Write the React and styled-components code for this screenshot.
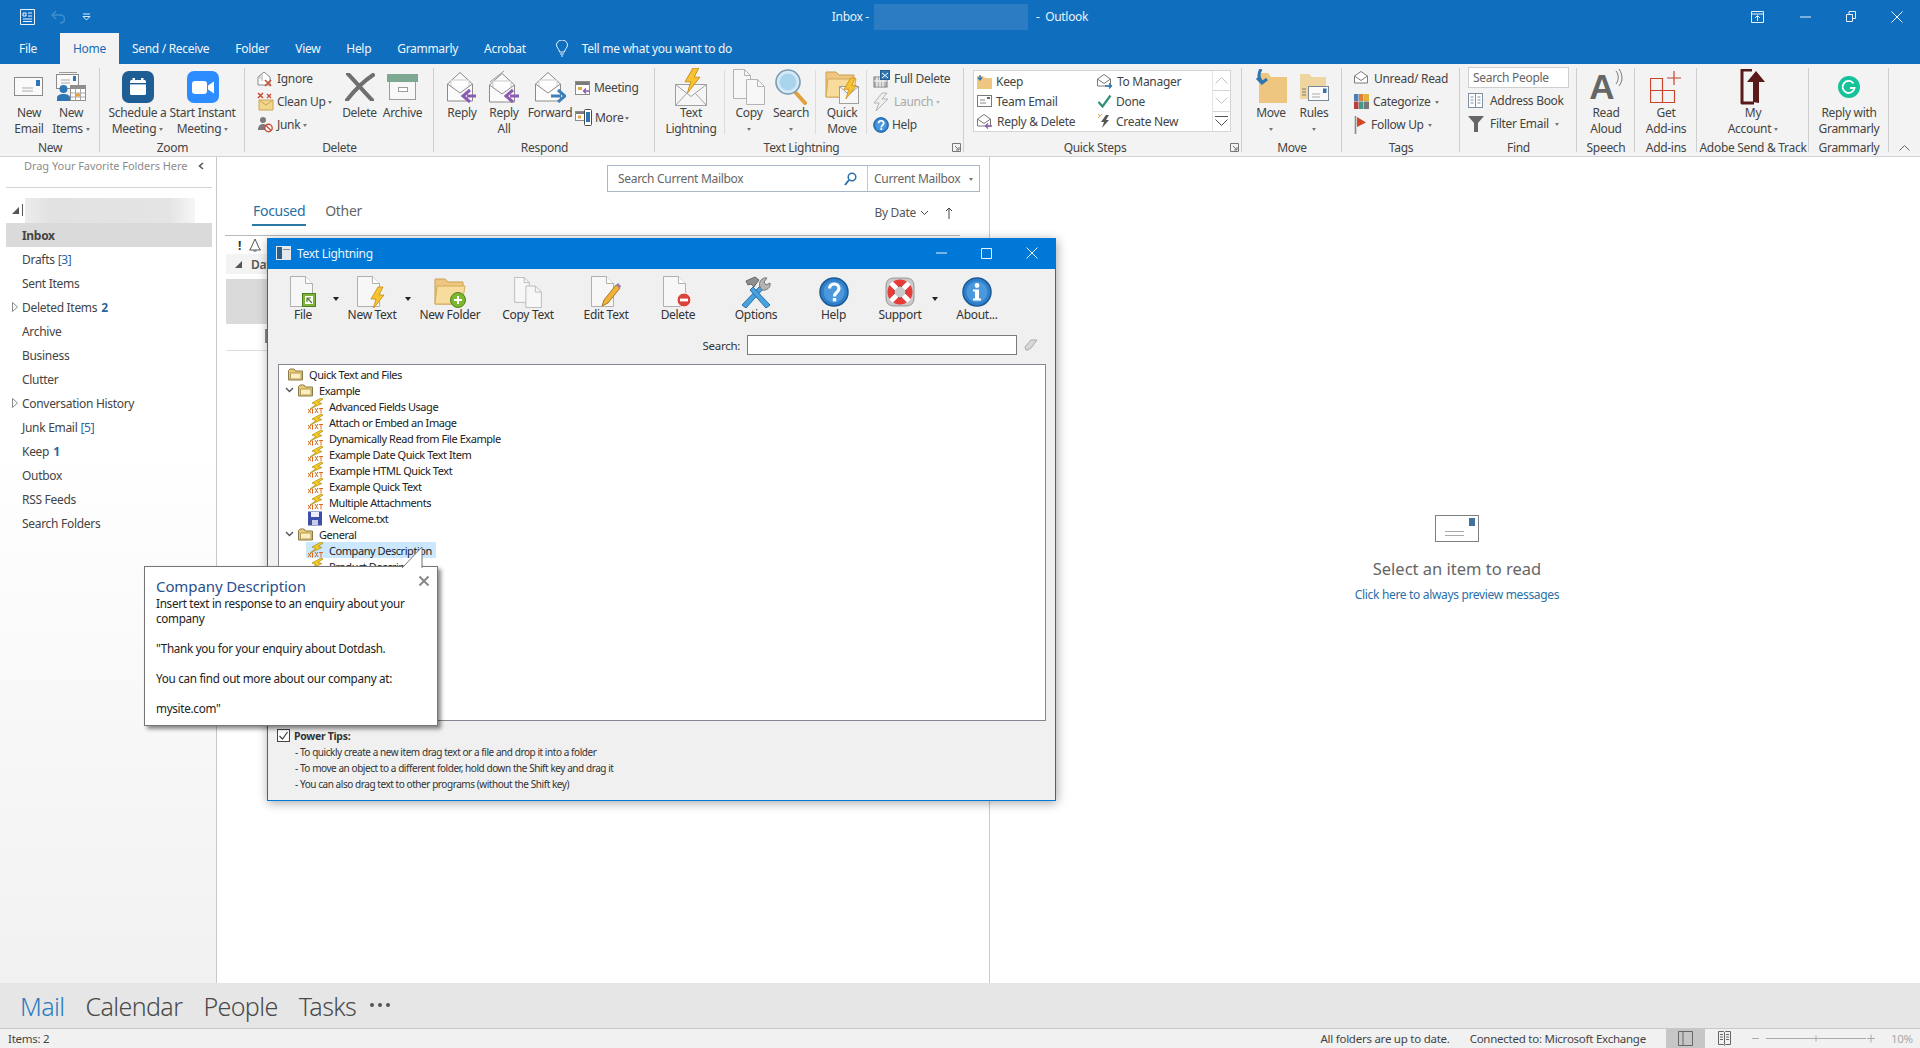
import React from "react";
import styled, { createGlobalStyle } from "styled-components";

const FONT = `"Noto Sans", "Open Sans", "Liberation Sans", sans-serif`;

const Global = createGlobalStyle`
  html, body { margin: 0; padding: 0; background: #fff; }
  body { font-family: ${FONT}; font-size: 12px; color: #444; letter-spacing: -0.3px; }
  svg { display: block; flex: none; }
`;

/* ---------- page frame ---------- */
const Page = styled.div`
  position: relative; width: 1920px; height: 1048px; overflow: hidden;
  display: flex; flex-direction: column; background: #fff;
`;
const TitleBar = styled.div`
  height: 33px; background: #106ebe; color: #e9f2fa;
  display: grid; grid-template-columns: 1fr auto 1fr; align-items: center;
`;
const Qat = styled.div`display: flex; align-items: center; padding-left: 20px; gap: 15px;`;
const TitleText = styled.div`display: flex; align-items: center; font-size: 12px; gap: 5px;`;
const TitleTail = styled.span`margin-left: 3px;`;
const Blur = styled.span`width: 154px; height: 26px; background: #2b7cc3; display: block;`;
const WinBtns = styled.div`display: flex; justify-content: flex-end; align-items: center; gap: 35px; padding-right: 17px;`;
const TabBar = styled.div`height: 31px; background: #106ebe; display: flex; align-items: stretch; padding-left: 6px;`;
const Tab = styled.div`
  display: flex; align-items: center; padding: 0 13px; font-size: 12px; margin-right: ${p => p.$mr || 0}px;
  color: ${p => (p.$active ? "#1a6bb5" : "#f2f7fc")};
  background: ${p => (p.$active ? "#f3f3f3" : "transparent")};
`;
const TellMe = styled.div`display: flex; align-items: center; gap: 14px; padding-left: 17px; color: #f2f7fc; font-size: 12px;`;

/* ---------- ribbon ---------- */
const Ribbon = styled.div`
  height: 92px; background: #f3f3f3; border-bottom: 1px solid #d2d2d2; display: flex; flex: none;
`;
const Group = styled.div`
  width: ${p => p.$w}px; flex: none; box-sizing: border-box; display: flex; flex-direction: column; position: relative;
  background: linear-gradient(#cfcfcf, #cfcfcf) right 4px / 1px 84px no-repeat;
`;
const GroupBody = styled.div`flex: 1; display: flex; align-items: flex-start; padding-left: ${p => p.$pl || 0}px; padding-top: 4px; min-height: 0;`;
const GroupFoot = styled.div`height: 16px; display: flex; align-items: center; padding-bottom: 1px; color: #444; font-size: 12px;`;
const GroupLabel = styled.div`flex: 1; text-align: center; white-space: nowrap;`;
const Launcher = styled.div`width: 16px; display: flex; justify-content: center;`;
const Big = styled.div`
  width: ${p => p.$w}px; flex: none; display: flex; flex-direction: column; align-items: center;
  text-align: center; line-height: 16px; color: ${p => p.$dim ? "#999" : "#444"};
`;
const BigIcon = styled.div`height: 37px; display: flex; align-items: center; justify-content: center;`;
const BigLine = styled.div`height: 16px; white-space: nowrap; display: flex; align-items: center; justify-content: center; gap: 3px;`;
const Caret = styled.span`
  display: inline-block; width: 0; height: 0; border-left: 2.5px solid transparent; border-right: 2.5px solid transparent;
  border-top: 3px solid ${p => p.$c || "#777"}; margin-top: 1px;
`;
const SmallCol = styled.div`
  width: ${p => p.$w}px; flex: none; display: flex; flex-direction: column; margin-top: -1px; padding-top: ${p => p.$pt || 0}px; gap: ${p => p.$gap || 0}px;
`;
const SmallRow = styled.div`
  height: 23px; display: flex; align-items: center; gap: ${p => p.$gap ?? 3}px; white-space: nowrap;
  color: ${p => (p.$dim ? "#aaa" : "#444")};
`;
const VSep = styled.div`width: 1px; height: 64px; background: #dcdcdc; margin: 2px ${p => p.$mr || 3}px 0 ${p => p.$ml || 3}px; flex: none;`;
const Gallery = styled.div`
  margin: 2px 0 0 9px; width: 258px; height: 62px; box-sizing: border-box; background: #fff; border: 1px solid #d4d4d4;
  display: grid; grid-template-columns: 120px 1fr 18px;
`;
const GalleryCol = styled.div`padding: 0 0 0 3px; display: flex; flex-direction: column;`;
const GalleryRow = styled.div`height: 20px; display: flex; align-items: center; gap: 4px; white-space: nowrap; color: #444;`;
const GalleryScroll = styled.div`display: flex; flex-direction: column; border-left: 1px solid #e4e4e4;`;
const ScrollCell = styled.div`flex: 1; display: flex; align-items: center; justify-content: center; border-bottom: 1px solid #d4d4d4; &:last-child{border-bottom:0;}`;
const PeopleBox = styled.div`
  width: 101px; height: 21px; box-sizing: border-box; border: 1px solid #cfcfcf; background: #fff; color: #666;
  display: flex; align-items: center; padding-left: 4px; margin-bottom: 1px;
`;
const ReadA = styled.span`font-size: 35px; line-height: 37px; font-weight: 700; color: #666; font-family: "Liberation Sans", sans-serif; letter-spacing: 0;`;
const IconPair = styled.div`display: flex; align-items: flex-start; gap: 0;`;
const RibbonEnd = styled.div`flex: 1; display: flex; align-items: flex-end; justify-content: center; padding-bottom: 5px;`;

/* ---------- main ---------- */
const Main = styled.div`flex: 1; display: flex; min-height: 0;`;
const FolderPane = styled.div`
  width: 217px; flex: none; box-sizing: border-box; border-right: 1px solid #c8c8c8;
  background: linear-gradient(#ffffff 35%, #f1f1f1);
`;
const Favorites = styled.div`
  height: 31px; box-sizing: border-box; margin: 0 4px 0 6px; border-bottom: 1px solid #d4d4d4; padding: 0 0 0 18px;
  display: flex; align-items: flex-start; justify-content: space-between; line-height: 18px; color: #8c8c8c; font-size: 11px; letter-spacing: -0.05px;
`;
const FavChevron = styled.div`padding: 5px 8px 0 0;`;
const AccountRow = styled.div`margin: 9px 4px 0 6px; height: 26px; display: flex; align-items: center;`;
const AccountBlur = styled.div`width: 170px; height: 25px; margin-left: 2px; background: linear-gradient(90deg,#ececec,#e2e2e2 15%,#e4e4e4 85%,#f6f6f6);`;
const Cursorbar = styled.div`width: 1px; height: 12px; background: #555;`;
const FolderRow = styled.div`
  margin: 0 4px 0 6px; height: 24px; display: flex; align-items: center; font-size: 12px;
  background: ${p => (p.$active ? "#dadada" : "transparent")}; font-weight: ${p => (p.$active ? 700 : 400)}; color: #444;
`;
const Slot = styled.div`width: 16px; flex: none; display: flex; justify-content: center; padding-left: 2px; box-sizing: border-box;`;
const Count = styled.span`color: #2a6599; margin-left: ${p => p.$bold ? 4 : 3}px; font-weight: ${p => (p.$bold ? 700 : 400)};`;

const ListPane = styled.div`width: 773px; flex: none; box-sizing: border-box; border-right: 1px solid #c8c8c8; display: flex; flex-direction: column;`;
const SearchWrap = styled.div`display: flex; justify-content: flex-end; padding: 8px 9px 0 0;`;
const SearchBox = styled.div`
  width: 373px; height: 27px; box-sizing: border-box; border: 1px solid #a9b8c6; display: flex; align-items: center; color: #666;
`;
const SearchInput = styled.div`flex: 1; display: flex; align-items: center; justify-content: space-between; padding: 0 10px; height: 100%; border-right: 1px solid #c0c8d0;`;
const SearchScope = styled.div`width: 111px; flex: none; display: flex; justify-content: space-between; align-items: center; padding: 0 6px; box-sizing: border-box;`;
const ListTabs = styled.div`height: 34px; display: flex; align-items: flex-end; padding: 0 32px 0 35px; margin-top: 0;`;
const LTab = styled.div`
  font-size: 14px; height: 24px; display: flex; align-items: flex-start; line-height: 22px; margin-right: 18px; padding: 0 1px;
  color: ${p => (p.$active ? "#2a6f9f" : "#666")}; border-bottom: 2px solid ${p => (p.$active ? "#2a78a8" : "transparent")};
`;
const Sorter = styled.div`margin-left: auto; height: 24px; display: flex; align-items: flex-start; line-height: 22px; gap: 4px; color: #555;`;
const ListRule = styled.div`margin: 9px 29px 0 8px; border-top: 1px solid #b9b9b9;`;
const HeaderIcons = styled.div`height: 18px; display: flex; align-items: center; padding-left: 21px; gap: 8px; color: #333; font-weight: 700;`;
const GroupHead = styled.div`height: 20px; margin-left: 9px; background: #f3f3f3; display: flex; align-items: center; padding-left: 9px; gap: 9px; font-weight: 600; color: #555;`;
const SelBlock = styled.div`height: 45px; margin: 5px 0 0 9px; background: #dadada;`;
const RowFoot = styled.div`height: 27px; margin-left: 9px; border-bottom: 1px solid #dedede; box-sizing: border-box; padding: 5px 0 0 39px;`;
const TinyMark = styled.div`width: 3px; height: 14px; background: #888;`;
const Reading = styled.div`flex: 1; display: flex; flex-direction: column; align-items: center; justify-content: center; padding: 0 0 22px 4px;`;
const ReadTitle = styled.div`margin-top: 15px; font-size: 16.5px; line-height: 24px; color: #666; letter-spacing: 0;`;
const ReadLink = styled.div`margin-top: 5px; font-size: 12px; line-height: 18px; color: #2a6fa8; letter-spacing: -0.33px;`;

const NavBar = styled.div`
  height: 46px; box-sizing: border-box; background: #e6e6e6; border-bottom: 1px solid #c8c8c8; flex: none;
  display: flex; align-items: center; padding: 0 0 0 20px; gap: 21px;
`;
const NavItem = styled.div`font-size: 25px; font-weight: 300; letter-spacing: -0.6px; color: ${p => (p.$active ? "#2b7cc0" : "#4a4a4a")};`;
const NavDots = styled.div`display: flex; gap: 4px; margin: 0 0 2px -7px;`;
const Dot = styled.i`width: 4px; height: 4px; border-radius: 50%; background: #555; display: block;`;
const StatusBar = styled.div`height: 19px; background: #f1f1f1; flex: none; display: flex; align-items: center; padding-left: 8px; color: #444; font-size: 11.5px; letter-spacing: -0.25px;`;
const StatusText = styled.div`margin-left: ${p => p.$ml || 0}px; white-space: nowrap; flex: none;`;
const ViewBtn = styled.div`
  width: ${p => p.$w || 39}px; height: 19px; display: flex; align-items: center; justify-content: center; flex: none;
  background: ${p => (p.$on ? "#c6c6c6" : "transparent")}; margin-left: ${p => p.$ml || 0}px;
`;
const Zoomer = styled.div`display: flex; align-items: center; margin-left: 8px; color: #999; flex: none;`;
const ZoomPct = styled.div`margin-left: 16px; color: #aaa; white-space: nowrap;`;

/* ---------- dialog ---------- */
const Dialog = styled.div`
  position: absolute; left: 267px; top: 238px; width: 789px; height: 563px; box-sizing: border-box;
  border: 1px solid #0078d7; background: #f0f0f0; box-shadow: 1px 2px 10px rgba(0,0,0,.35);
  display: flex; flex-direction: column; font-family: ${FONT}; z-index: 2;
`;
const DialogTitle = styled.div`
  height: 30px; box-sizing: border-box; background: #0078d7; flex: none; display: flex; align-items: center; padding: 0 7px 2px 8px; gap: 6px; color: #eaf4fc; font-size: 12px;
`;
const DialogBtns = styled.div`margin-left: auto; display: flex; align-items: center; gap: 34px; padding-right: 10px;`;
const Toolbar = styled.div`display: flex; padding: 8px 0 0 7px; height: 59px; box-sizing: border-box; flex: none;`;
const ToolBtn = styled.div`width: ${p => p.$w}px; flex: none; display: flex; flex-direction: column; align-items: center; color: #333; white-space: nowrap; font-size: 12px;`;
const ToolIcon = styled.div`height: 30px; display: flex; align-items: center; justify-content: center;`;
const ToolLabel = styled.div`line-height: 16px;`;
const ToolArrow = styled.div`width: ${p => p.$w || 10}px; flex: none; display: flex; justify-content: center; padding-top: 20px; box-sizing: border-box;`;
const DCaret = styled.span`display: block; width: 0; height: 0; border-left: 3px solid transparent; border-right: 3px solid transparent; border-top: 4px solid #222;`;
const SearchRow = styled.div`display: flex; align-items: center; justify-content: flex-end; height: 20px; margin-top: 7px; padding-right: 17px; gap: 7px; color: #333; font-size: 11.5px; flex: none;`;
const DialogInput = styled.div`width: 270px; height: 20px; box-sizing: border-box; background: #fff; border: 1px solid #7a7a7a;`;
const Tree = styled.div`
  margin: 9px 9px 0 10px; height: 357px; box-sizing: border-box; background: #fff; border: 1px solid #828790; padding-top: 1px; flex: none; overflow: hidden;
`;
const TreeRow = styled.div`
  height: 16px; display: flex; align-items: center; width: fit-content; color: #222; font-size: 11px; letter-spacing: -0.44px; white-space: nowrap;
  padding-left: ${p => p.$pl || 0}px; padding-right: ${p => (p.$sel ? 4 : 0)}px; margin-left: ${p => p.$ml || 0}px;
  background: ${p => (p.$sel ? "#cce8ff" : "transparent")}; gap: ${p => p.$gap ?? 5}px;
`;
const ChevSlot = styled.div`width: 13px; margin-right: -5px; flex: none;`;
const Tips = styled.div`margin: 8px 0 0 9px; color: #333; font-size: 11px;`;
const TipHead = styled.div`display: flex; align-items: center; gap: 4px; height: 13px; font-weight: 700; font-size: 10.5px;`;
const CheckBox = styled.div`width: 13px; height: 13px; box-sizing: border-box; background: #fff; border: 1px solid #444; display: flex; align-items: center; justify-content: center;`;
const TipLines = styled.div`padding: 2px 0 0 18px; line-height: 16px; font-size: 10px; letter-spacing: -0.44px;`;

const Callout = styled.div`
  position: absolute; left: 144px; top: 566px; width: 294px; height: 160px; box-sizing: border-box; z-index: 3;
  background: #fff; border: 1px solid #767676; box-shadow: 3px 3px 4px rgba(0,0,0,.45); padding: 9px 10px 0 11px;
`;
const CalloutTitle = styled.div`font-size: 15px; line-height: 20px; color: #2b4f8a; letter-spacing: -0.1px;`;
const CalloutBody = styled.div`font-size: 11.7px; line-height: 15px; color: #222; white-space: pre-line;`;
const CalloutClose = styled.div`position: absolute; right: 8px; top: 9px;`;
const CalloutTail = styled.div`position: absolute; left: 257px; top: -21px;`;

/* ---------- icons ---------- */
const S = ({ w, h, children, vb }) => <svg width={w} height={h} viewBox={vb || `0 0 ${w} ${h}`} fill="none">{children}</svg>;

const Bolt = ({ t = "", f = "#f7c331", s = "#c98b12" }) => (
  <polygon transform={t} points="7,0 0,12 5,12 2,22 13,8 8,8 12,0" fill={f} stroke={s} strokeWidth=".8" />
);
const ClosedEnv = ({ x = 0, y = 0, w = 28, h = 18 }) => (
  <g>
    <rect x={x + .5} y={y + .5} width={w} height={h} fill="#fafafa" stroke="#8b8b8b" />
    <rect x={x + w - 6} y={y + 3} width={4} height={6} fill="#2e75b5" />
    <path d={`M${x + 8} ${y + 11}h11M${x + 8} ${y + 14}h11`} stroke="#aaa" />
  </g>
);
const OpenEnv = ({ x = 0, y = 0 }) => (
  <g>
    <path d={`M${x + .5} ${y + 12} L${x + 13} ${y + .5} L${x + 25.5} ${y + 12} V${y + 29} H${x + .5} Z`} fill="#fbfbfb" stroke="#8b8b8b" />
    <path d={`M${x + 4} ${y + 14} V${y + 8} H${x + 22} V${y + 14}`} stroke="#c9c9c9" fill="#fff" />
    <path d={`M${x + .5} ${y + 12} L${x + 13} ${y + 21} L${x + 25.5} ${y + 12}`} stroke="#8b8b8b" />
  </g>
);
const ArrowL = ({ x, y, c = "#8a5bb0" }) => <path d={`M${x + 14} ${y}H${x + 5}M${x + 8} ${y - 6}L${x + 1} ${y}L${x + 8} ${y + 6}`} stroke={c} strokeWidth="3" />;
const ArrowR = ({ x, y, c = "#3e7fb8" }) => <path d={`M${x} ${y}H${x + 10}M${x + 7} ${y - 6}L${x + 14} ${y}L${x + 7} ${y + 6}`} stroke={c} strokeWidth="3" />;

const IcNewEmail = () => <S w={30} h={20}><ClosedEnv /></S>;
const IcNewItems = () => (
  <S w={30} h={30}>
    <rect x=".5" y="2.5" width="22" height="14" fill="#fafafa" stroke="#8b8b8b" />
    <path d="M3 .5h18" stroke="#9a9a9a" />
    <rect x="17" y="4" width="3" height="5" fill="#2e75b5" />
    <path d="M5 8h9M5 11h9" stroke="#aaa" />
    <circle cx="7.5" cy="17" r="4" fill="#2e75b5" />
    <path d="M1 29v-3c0-3 3-4 6.5-4s6.5 1 6.5 4v3z" fill="#2e75b5" />
    <rect x="14.5" y="13.5" width="15" height="15" fill="#fff" stroke="#8f8f8f" />
    <rect x="15" y="14" width="14" height="3" fill="#8f8f8f" />
    <path d="M19.5 17v11M24.5 17v11M15 21h14M15 25h14" stroke="#a8a8a8" />
    <rect x="20" y="21.5" width="4" height="3" fill="#e8a33a" />
  </S>
);
const IcSchedule = () => (
  <S w={32} h={32}>
    <rect width="32" height="32" rx="7" fill="#1f5d95" />
    <rect x="8" y="9" width="16" height="15" rx="1.5" fill="#fff" />
    <rect x="10.5" y="7" width="2.5" height="4" fill="#fff" />
    <rect x="19" y="7" width="2.5" height="4" fill="#fff" />
    <rect x="8" y="12" width="16" height="1.4" fill="#1f5d95" />
  </S>
);
const IcZoom = () => (
  <S w={32} h={32}>
    <rect width="32" height="32" rx="7" fill="#2d8cff" />
    <rect x="5" y="10" width="15" height="13" rx="3" fill="#fff" />
    <path d="M21 14.5l6-4v12l-6-4z" fill="#fff" />
  </S>
);
const IcIgnore = () => (
  <S w={17} h={17}>
    <path d="M1 7l6-5 6 5v8H1z" fill="#fff" stroke="#8a8a8a" />
    <path d="M3 9V5M5 11V4" stroke="#aaa" />
    <path d="M8 10l6 6M14 10l-6 6" stroke="#c64b35" strokeWidth="1.6" />
  </S>
);
const IcClean = () => (
  <S w={17} h={19}>
    <path d="M1 1l5 5M6 1l-5 5" stroke="#d04a30" strokeWidth="1.6" />
    <path d="M2 8h14v10H2z" fill="#f2d48a" stroke="#c9a657" />
    <path d="M2 8l7 5 7-5" stroke="#c9a657" />
    <path d="M10 2l4 4M14 2l-4 4" stroke="#d04a30" strokeWidth="1.4" />
  </S>
);
const IcJunk = () => (
  <S w={17} h={17}>
    <circle cx="6" cy="4" r="3" fill="#7b7b7b" />
    <path d="M1 14c0-4 2-6 5-6s5 2 5 6z" fill="#7b7b7b" />
    <circle cx="11.5" cy="12" r="3.7" fill="#fff" stroke="#c64b35" strokeWidth="1.4" />
    <path d="M9 9.5l5 5" stroke="#c64b35" strokeWidth="1.4" />
  </S>
);
const IcDelete = () => <S w={30} h={28}><path d="M3 1c7 7 16 18 24 26M28 2C19 8 9 18 2 27" stroke="#6f6f6f" strokeWidth="4" strokeLinecap="round" /></S>;
const IcArchive = () => (
  <S w={31} h={26}>
    <rect x="2.5" y="6.5" width="26" height="19" fill="#f8f8f8" stroke="#9c9c9c" />
    <rect x="0" y="0" width="31" height="8" fill="#7fa892" />
    <rect x="11.5" y="13.5" width="9" height="4" fill="#fff" stroke="#9c9c9c" />
  </S>
);
const IcReply = () => <S w={32} h={32}><OpenEnv x={1} y={1} /><ArrowL x={16} y={25} /></S>;
const IcReplyAll = () => (
  <S w={34} h={33}>
    <path d="M3 12l14-11" stroke="#9a9a9a" />
    <OpenEnv x={2} y={3} />
    <ArrowL x={18} y={26} />
  </S>
);
const IcForward = () => <S w={32} h={32}><OpenEnv x={1} y={1} /><ArrowR x={17} y={25} /></S>;
const IcMeeting = () => (
  <S w={16} h={16}>
    <rect x=".5" y="1.5" width="14" height="13" fill="#fff" stroke="#8b8b8b" />
    <rect x="1" y="2" width="13" height="3" fill="#7a7a7a" />
    <rect x="3" y="7" width="4" height="3" fill="#e8a33a" />
    <path d="M15 11H9M11 8.5L8.5 11l2.5 2.5" stroke="#8a5bb0" strokeWidth="1.4" />
  </S>
);
const IcMore = () => (
  <S w={18} h={18}>
    <rect x=".5" y="2.5" width="9" height="9" fill="#fff" stroke="#8b8b8b" />
    <rect x="1" y="3" width="8" height="2" fill="#7a7a7a" />
    <rect x="3" y="6.5" width="3" height="3" fill="#e8a33a" />
    <rect x="9.5" y=".5" width="7" height="16" rx="1" fill="#fff" stroke="#4a4a4a" />
    <rect x="11" y="3" width="4" height="10" fill="#2e75b5" />
  </S>
);
const IcTextL = () => (
  <S w={32} h={38}>
    <path d="M.5 16.5h31v21H.5z" fill="#f6f6f6" stroke="#a0a0a0" />
    <path d="M.5 16.5l15.5 12 15.5-12M.5 37.5l11-12M31.5 37.5l-11-12" stroke="#a0a0a0" />
    <Bolt t="translate(10 0) scale(1.15)" />
  </S>
);
const DocPair = ({ w = 32, h = 36 }) => (
  <S w={w} h={h} vb="0 0 32 36">
    <path d="M.5.5h11l6 6v23H.5z" fill="#f7f7f7" stroke="#b4b4b4" />
    <path d="M11.5.5v6h6" stroke="#b4b4b4" />
    <path d="M13.5 10.5h11l7 7v18h-18z" fill="#f7f7f7" stroke="#b4b4b4" />
    <path d="M24.5 10.5v7h7" stroke="#b4b4b4" />
  </S>
);
const IcSearch = () => (
  <S w={32} h={36}>
    <path d="M21 24l9 10" stroke="#e2a13b" strokeWidth="4" strokeLinecap="round" />
    <circle cx="13" cy="13" r="12" fill="#d4e9f6" stroke="#7b9bb4" strokeWidth="1.6" />
    <circle cx="13" cy="13" r="8.5" fill="#a9d4ee" />
  </S>
);
const FolderShape = ({ t = "" }) => (
  <g transform={t}>
    <path d="M1 3h10l3 3h15v22H1z" fill="#eec680" stroke="#c9a050" />
    <path d="M3 10h28l-3 18H1z" fill="#f8dc9c" stroke="#d4aa5a" />
  </g>
);
const IcQuickMove = () => (
  <S w={34} h={36}>
    <FolderShape />
    <rect x="14.5" y="17.5" width="19" height="17" fill="#f6f6f6" stroke="#a0a0a0" />
    <path d="M14.5 17.5l9.5 8 9.5-8" stroke="#a0a0a0" />
    <Bolt t="translate(19 9) scale(.95)" />
  </S>
);
const IcFullDelete = () => (
  <S w={18} h={18}>
    <rect x="1" y="7" width="13" height="10" fill="#b9b9b9" stroke="#7a7a7a" />
    <path d="M4 7v10M7 7v10M10 7v10M1 11h13" stroke="#fff" />
    <rect x="7.5" y=".5" width="9" height="9" fill="#2e75b5" stroke="#245d90" />
    <path d="M9 3l6 5M15 3l-6 5" stroke="#fff" />
  </S>
);
const IcLaunch = () => <S w={18} h={20}><polygon points="9,1 1,11 6,11 3,19 15,7 9,7 14,1" fill="#efefef" stroke="#b4b4b4" /></S>;
const HelpCircle = ({ size = 16 }) => (
  <S w={size} h={size} vb="0 0 30 30">
    <circle cx="15" cy="15" r="14" fill="#2f7fca" stroke="#1c5a96" strokeWidth="1.5" />
    <circle cx="15" cy="15" r="10.5" fill="#4b98dd" />
    <path d="M10.5 11.5c0-6 9.5-6 9.5 0 0 4-4.5 3.5-4.5 8" stroke="#fff" strokeWidth="3.2" />
    <rect x="13.8" y="21" width="3.4" height="3.4" fill="#fff" />
  </S>
);
const IcKeep = () => (
  <S w={15} h={15}>
    <path d="M0 2h6l2 2h7v11H0z" fill="#eec680" />
    <path d="M3 1v4M1 3.5L3 6l2-2.5" stroke="#2e75b5" strokeWidth="1.3" />
  </S>
);
const IcTeam = () => <S w={15} h={13}><rect x=".5" y=".5" width="14" height="11" fill="#fff" stroke="#7a7a7a" /><rect x="10" y="2" width="3" height="2" fill="#666" /><path d="M3 5h5M3 8h6" stroke="#888" /></S>;
const SmallOpen = ({ arrow }) => (
  <S w={16} h={15}>
    <path d="M.5 5L7 .5 13.5 5v7H.5z" fill="#fff" stroke="#7a7a7a" />
    <path d="M.5 5L7 9.5 13.5 5" stroke="#7a7a7a" />
    {arrow === "l" ? <path d="M15 12H9M11 9.5L8.5 12l2.5 2.5" stroke="#8a5bb0" strokeWidth="1.3" />
      : arrow === "r" ? <path d="M8 12h6M12 9.5l2.5 2.5-2.5 2.5" stroke="#2e75b5" strokeWidth="1.3" /> : null}
  </S>
);
const IcDone = () => <S w={15} h={14}><path d="M1.5 8l4 4.5L13.5 1.5" stroke="#2f8f7a" strokeWidth="2.2" /></S>;
const IcCreate = () => (
  <S w={15} h={16}>
    <path d="M1 1l2 2M5 1L3 3M1 5l2-2" stroke="#d9b04a" />
    <polygon points="9,2 4,9 7,9 5,15 12,7 9,7 12,2" fill="#555" />
  </S>
);
const IcMove = () => (
  <S w={32} h={36}>
    <path d="M4 4h9l3 4h16v26H4z" fill="#eec680" />
    <path d="M6 0c-3 5-3 9 1 13M2 9l5 5 5-4" stroke="#2e75b5" strokeWidth="3" />
  </S>
);
const IcRules = () => (
  <S w={31} h={30}>
    <path d="M1 6V2h9l3 3h14v22H1z" fill="#efd59f" />
    <rect x="9.5" y="14.5" width="20" height="14" fill="#fafafa" stroke="#7a8a96" />
    <rect x="24" y="16.5" width="3.5" height="4.5" fill="#2e75b5" />
    <path d="M13 22h8M13 25h8" stroke="#aaa" />
    <path d="M3 17h4M3 20h4M3 23h4" stroke="#7a7a7a" />
  </S>
);
const IcCategorize = () => (
  <S w={15} h={15}>
    <rect width="4.5" height="7" fill="#4f7fb3" /><rect x="5" width="4.5" height="7" fill="#e07f3a" /><rect x="10" width="5" height="7" fill="#e3b23a" />
    <rect y="7.5" width="4.5" height="7.5" fill="#b83f3f" /><rect x="5" y="7.5" width="4.5" height="7.5" fill="#3f9a8c" /><rect x="10" y="7.5" width="5" height="7.5" fill="#777" />
  </S>
);
const IcFlag = () => <S w={13} h={18}><path d="M1.5 0v18" stroke="#8a8a8a" strokeWidth="1.6" /><path d="M3 1l9 5.5L3 11z" fill="#d24726" /></S>;
const IcBook = () => (
  <S w={16} h={16}>
    <rect x=".5" y=".5" width="14" height="14" fill="#fff" stroke="#7f8fa0" />
    <path d="M7.5.5v14M2.5 4h3M2.5 7h3M2.5 10h3M9.5 4h3M9.5 7h3M9.5 10h3" stroke="#7f8fa0" />
  </S>
);
const IcFilter = () => <S w={16} h={16}><path d="M0 0h16l-6 7v9H6V7z" fill="#666" /></S>;
const IcWaves = () => <S w={8} h={20}><path d="M1 3c3 4 3 9 0 13M4 1c4 6 4 12 0 17" stroke="#777" /></S>;
const IcAddIns = () => (
  <S w={32} h={32}>
    <path d="M.5 7.5h12v12h12v12H.5zM.5 19.5h12v12M12.5 7.5v12" stroke="#c8452c" strokeWidth="1.2" />
    <path d="M24 0v14M17 7h14" stroke="#c8452c" strokeWidth="1.2" />
  </S>
);
const IcAccount = () => (
  <S w={26} h={36}>
    <path d="M12 1H2v33h12" stroke="#5a1a1a" strokeWidth="3" strokeLinejoin="round" />
    <path d="M13 33V13H7L16 2l9 11h-6v21z" fill="#5a1a1a" />
  </S>
);
const IcGrammarly = () => (
  <S w={22} h={22}>
    <circle cx="11" cy="11" r="11" fill="#15c39a" />
    <path d="M15.5 7.5a6 6 0 1 0 1 4.5h-4.5" stroke="#fff" strokeWidth="1.8" />
  </S>
);
const DocBase = () => (
  <g>
    <path d="M.5.5h15l7 7v23H.5z" fill="#f7f7f7" stroke="#b0b0b0" />
    <path d="M15.5.5v7h7" stroke="#b0b0b0" fill="#fff" />
  </g>
);
const DlgFile = () => (
  <S w={26} h={32}>
    <DocBase />
    <rect x="12.5" y="17.5" width="13" height="13" fill="#7fb13d" stroke="#4f7f1f" />
    <rect x="15" y="20" width="8" height="8" fill="#fff" />
    <path d="M22 27l-5-5M17 26v-4h4" stroke="#4f7f1f" strokeWidth="1.2" />
  </S>
);
const DlgNewText = () => <S w={30} h={32}><DocBase /><Bolt t="translate(14 11)" /></S>;
const DlgFolder = () => (
  <S w={32} h={32}>
    <FolderShape />
    <circle cx="24" cy="24" r="7.5" fill="#7cb82f" stroke="#4f7f1f" />
    <path d="M24 20v8M20 24h8" stroke="#fff" strokeWidth="2" />
  </S>
);
const DlgEdit = () => (
  <S w={30} h={32}>
    <DocBase />
    <path d="M11 30l2-6L25 9l4 3-12 15z" fill="#f0b23a" stroke="#a97a1c" />
    <path d="M25 9l4 3 1-2-3-3z" fill="#9a7ab8" />
  </S>
);
const DlgDelete = () => (
  <S w={30} h={32}>
    <DocBase />
    <circle cx="21" cy="24" r="7" fill="#d8453a" stroke="#fff" />
    <rect x="17" y="22.6" width="8" height="2.8" fill="#fff" />
  </S>
);
const DlgTools = () => (
  <S w={32} h={32}>
    <path d="M2 29L20 10l3 3L6 32z" fill="#49a2e0" stroke="#2a6fa8" />
    <path d="M30 29L13 11l-3 3 16 18z" fill="#49a2e0" stroke="#2a6fa8" />
    <path d="M6 5l9-4 4 3-3 4 -2 3-3-3-3 1z" fill="#8f8f8f" stroke="#666" />
    <path d="M20 11c-2-5 2-10 7-9l-3 4 2 3 4-2c1 5-4 8-8 7z" fill="#b4b4b4" stroke="#777" />
  </S>
);
const DlgBuoy = () => (
  <S w={30} h={30}>
    <rect x="1" y="1" width="28" height="28" rx="7" fill="#c9c9c9" stroke="#999" />
    <circle cx="15" cy="15" r="12.5" fill="#e63b36" />
    <circle cx="15" cy="15" r="6" fill="#c9c9c9" stroke="#a33" />
    <path d="M6 6l5.5 5.5M24 6l-5.5 5.5M6 24l5.5-5.5M24 24l-5.5-5.5" stroke="#fff" strokeWidth="5" />
  </S>
);
const DlgInfo = () => (
  <S w={30} h={30}>
    <circle cx="15" cy="15" r="14" fill="#2f7fca" stroke="#1c5a96" strokeWidth="1.5" />
    <circle cx="15" cy="15" r="10.5" fill="#4b98dd" />
    <circle cx="15" cy="8.5" r="2.4" fill="#fff" />
    <path d="M11 12.5h6v9h2v2h-8v-2h2v-7h-2z" fill="#fff" />
  </S>
);
const TreeFolder = () => (
  <S w={16} h={13}>
    <path d="M.5 12V2.5L2 1h4l1.5 2h7v9z" fill="#ecc873" stroke="#8a7a4a" />
    <path d="M2.5 11V5h10.5v6z" fill="#fbeec0" stroke="#b49c5a" />
  </S>
);
const TreeChev = () => <S w={9} h={6}><path d="M1 1l3.5 3.5L8 1" stroke="#555" strokeWidth="1.4" /></S>;
const TreeText = () => (
  <S w={15} h={16}>
    <polygon points="13,0 4,5 8,6.5 2,11 14,5.5 10,4.5 15,1" fill="#f7cb1e" stroke="#9c7a10" strokeWidth=".6" />
    <path d="M0 11l3 4M3 11l-3 4M4.5 10.5v5M7 10l3 5M10 10l-3 5M11 10.5h4M13 10.5v5" stroke="#dc6a1e" strokeWidth="1" />
  </S>
);
const TreeDisk = () => (
  <S w={15} h={15}>
    <rect width="14" height="14" y=".5" fill="#3d4fa8" />
    <rect x="3" y="1" width="8" height="5" fill="#eef" />
    <rect x="4" y="9" width="6" height="5" fill="#c9cde6" />
  </S>
);
const X = ({ size = 11, c = "#f2f7fc", sw = 1 }) => <S w={size} h={size}><path d={`M.5 .5L${size - .5} ${size - .5}M${size - .5} .5L.5 ${size - .5}`} stroke={c} strokeWidth={sw} /></S>;
const Launch = () => <S w={9} h={9}><path d="M.5 8.5V.5h8v8zM3 3l4 4M7 4v3H4" stroke="#777" /></S>;

/* ---------- data ---------- */
const folders = [
  { n: "Inbox", active: true },
  { n: "Drafts", c: "[3]" },
  { n: "Sent Items" },
  { n: "Deleted Items", c: "2", b: true, exp: true },
  { n: "Archive" },
  { n: "Business" },
  { n: "Clutter" },
  { n: "Conversation History", exp: true },
  { n: "Junk Email", c: "[5]" },
  { n: "Keep", c: "1", b: true },
  { n: "Outbox" },
  { n: "RSS Feeds" },
  { n: "Search Folders" },
];
const tabs = ["Send / Receive", "Folder", "View", "Help", "Grammarly", "Acrobat"];
const examples = ["Advanced Fields Usage", "Attach or Embed an Image", "Dynamically Read from File Example", "Example Date Quick Text Item", "Example HTML Quick Text", "Example Quick Text", "Multiple Attachments"];

const BigBtn = ({ w, icon, l1, l2, caret, dim }) => (
  <Big $w={w} $dim={dim}>
    <BigIcon>{icon}</BigIcon>
    <BigLine>{l1}</BigLine>
    <BigLine>{l2}{caret && <Caret />}</BigLine>
  </Big>
);
const G = ({ w, label, launcher, pl, children }) => (
  <Group $w={w}>
    <GroupBody $pl={pl}>{children}</GroupBody>
    <GroupFoot>
      <GroupLabel>{label}</GroupLabel>
      {launcher && <Launcher><Launch /></Launcher>}
    </GroupFoot>
  </Group>
);
const Tool = ({ w, icon, label }) => (
  <ToolBtn $w={w}>
    <ToolIcon>{icon}</ToolIcon>
    <ToolLabel>{label}</ToolLabel>
  </ToolBtn>
);

export default function App() {
  return (
    <Page>
      <Global />
      <TitleBar>
        <Qat>
          <S w={16} h={18}>
            <path d="M.5 1.5h14v15H.5z" stroke="#eaf2fa" />
            <path d="M3 5h3v3H3zM8 5h4M8 8h4M3 11h9M3 13.5h9" stroke="#eaf2fa" />
          </S>
          <S w={16} h={14}><path d="M5 1L1 5l4 4M1 5h8c6 0 6 8 0 8" stroke="#3f8ed0" strokeWidth="1.4" /></S>
          <S w={9} h={8}><path d="M1 1h7M1 3.5h7l-3.5 3.5z" stroke="#d8e8f5" /></S>
        </Qat>
        <TitleText>
          <span>Inbox -</span>
          <Blur />
          <TitleTail>- &nbsp;Outlook</TitleTail>
        </TitleText>
        <WinBtns>
          <S w={14} h={12}><path d="M.5.5h12v11H.5zM.5 3h12M6.5 10V5M4 7l2.5-2.5L9 7" stroke="#eaf2fa" /></S>
          <S w={11} h={2}><path d="M0 1h11" stroke="#eaf2fa" /></S>
          <S w={10} h={11}><path d="M.5 3.5h6v7h-6zM3 3.5v-3h6.5v7H7" stroke="#eaf2fa" /></S>
          <X size={12} />
        </WinBtns>
      </TitleBar>
      <TabBar>
        <Tab $mr={10}>File</Tab>
        <Tab $active>Home</Tab>
        {tabs.map(t => <Tab key={t}>{t}</Tab>)}
        <TellMe>
          <S w={12} h={17}><path d="M3.5 12c0-3-3-4-3-7a5.5 5 0 0 1 11 0c0 3-3 4-3 7zM4 14h4M5 16h2" stroke="#eaf2fa" /></S>
          Tell me what you want to do
        </TellMe>
      </TabBar>

      <Ribbon>
        <G w={100} label="New" pl={8}>
          <BigBtn w={42} icon={<IcNewEmail />} l1="New" l2="Email" />
          <BigBtn w={42} icon={<IcNewItems />} l1="New" l2="Items" caret />
        </G>
        <G w={145} label="Zoom" pl={5}>
          <BigBtn w={65} icon={<IcSchedule />} l1="Schedule a" l2="Meeting" caret />
          <BigBtn w={65} icon={<IcZoom />} l1="Start Instant" l2="Meeting" caret />
        </G>
        <G w={189} label="Delete" pl={12}>
          <SmallCol $w={81}>
            <SmallRow><IcIgnore /> Ignore</SmallRow>
            <SmallRow><IcClean /> Clean Up <Caret /></SmallRow>
            <SmallRow><IcJunk /> Junk <Caret /></SmallRow>
          </SmallCol>
          <BigBtn w={43} icon={<IcDelete />} l1="Delete" />
          <BigBtn w={43} icon={<IcArchive />} l1="Archive" />
        </G>
        <G w={221} label="Respond" pl={7}>
          <BigBtn w={42} icon={<IcReply />} l1="Reply" />
          <BigBtn w={42} icon={<IcReplyAll />} l1="Reply" l2="All" />
          <BigBtn w={50} icon={<IcForward />} l1="Forward" />
          <SmallCol $w={78} $pt={9} $gap={7}>
            <SmallRow $gap={3}><IcMeeting /> Meeting</SmallRow>
            <SmallRow $gap={2}><IcMore /> More <Caret /></SmallRow>
          </SmallCol>
        </G>
        <G w={309} label="Text Lightning" pl={5} launcher>
          <BigBtn w={62} icon={<IcTextL />} l1="Text" l2="Lightning" />
          <VSep $ml={2} $mr={3} />
          <BigBtn w={42} icon={<DocPair />} l1="Copy" l2="" caret />
          <BigBtn w={42} icon={<IcSearch />} l1="Search" l2="" caret />
          <VSep $ml={3} $mr={4} />
          <BigBtn w={44} icon={<IcQuickMove />} l1="Quick" l2="Move" />
          <VSep $ml={2} $mr={6} />
          <SmallCol $w={80}>
            <SmallRow><IcFullDelete /> Full Delete</SmallRow>
            <SmallRow $dim><IcLaunch /> Launch <Caret $c="#bbb" /></SmallRow>
            <SmallRow><HelpCircle /> Help</SmallRow>
          </SmallCol>
        </G>
        <G w={278} label="Quick Steps" launcher>
          <Gallery>
            <GalleryCol>
              <GalleryRow><IcKeep /> Keep</GalleryRow>
              <GalleryRow><IcTeam /> Team Email</GalleryRow>
              <GalleryRow><SmallOpen arrow="l" /> Reply &amp; Delete</GalleryRow>
            </GalleryCol>
            <GalleryCol>
              <GalleryRow><SmallOpen arrow="r" /> To Manager</GalleryRow>
              <GalleryRow><IcDone /> Done</GalleryRow>
              <GalleryRow><IcCreate /> Create New</GalleryRow>
            </GalleryCol>
            <GalleryScroll>
              <ScrollCell><S w={13} h={7}><path d="M.5 6.5l6-6 6 6" stroke="#c4c4c4" /></S></ScrollCell>
              <ScrollCell><S w={13} h={7}><path d="M.5.5l6 6 6-6" stroke="#c4c4c4" /></S></ScrollCell>
              <ScrollCell><S w={13} h={10}><path d="M0 .5h13M.5 3.5l6 6 6-6" stroke="#555" /></S></ScrollCell>
            </GalleryScroll>
          </Gallery>
        </G>
        <G w={100} label="Move" pl={7}>
          <BigBtn w={44} icon={<IcMove />} l1="Move" l2="" caret />
          <BigBtn w={42} icon={<IcRules />} l1="Rules" l2="" caret />
        </G>
        <G w={118} label="Tags" pl={12}>
          <SmallCol $w={104}>
            <SmallRow $gap={4}><SmallOpen /> Unread/ Read</SmallRow>
            <SmallRow $gap={4}><IcCategorize /> Categorize <Caret /></SmallRow>
            <SmallRow $gap={4}><IcFlag /> Follow Up <Caret /></SmallRow>
          </SmallCol>
        </G>
        <G w={117} label="Find" pl={8}>
          <SmallCol $w={105}>
            <PeopleBox>Search People</PeopleBox>
            <SmallRow $gap={6}><IcBook /> Address Book</SmallRow>
            <SmallRow $gap={6}><IcFilter /> Filter Email <Caret /></SmallRow>
          </SmallCol>
        </G>
        <G w={58} label="Speech">
          <Big $w={58}>
            <BigIcon><IconPair><ReadA>A</ReadA><IcWaves /></IconPair></BigIcon>
            <BigLine>Read</BigLine>
            <BigLine>Aloud</BigLine>
          </Big>
        </G>
        <G w={62} label="Add-ins">
          <BigBtn w={62} icon={<IcAddIns />} l1="Get" l2="Add-ins" />
        </G>
        <G w={112} label="Adobe Send & Track">
          <BigBtn w={112} icon={<IcAccount />} l1="My" l2="Account" caret />
        </G>
        <G w={80} label="Grammarly">
          <BigBtn w={80} icon={<IcGrammarly />} l1="Reply with" l2="Grammarly" />
        </G>
        <RibbonEnd><S w={11} h={6}><path d="M.5 5.5l5-5 5 5" stroke="#666" /></S></RibbonEnd>
      </Ribbon>

      <Main>
        <FolderPane>
          <Favorites>
            <span>Drag Your Favorite Folders Here</span>
            <FavChevron><S w={6} h={8}><path d="M5 1L1.5 4 5 7" stroke="#555" strokeWidth="1.6" /></S></FavChevron>
          </Favorites>
          <AccountRow>
            <Slot><S w={7} h={7}><path d="M7 0v7H0z" fill="#555" /></S></Slot>
            <Cursorbar />
            <AccountBlur />
          </AccountRow>
          {folders.map(f => (
            <FolderRow key={f.n} $active={f.active}>
              <Slot>{f.exp && <S w={6} h={10}><path d="M.5.5l5 4.5-5 4.5z" stroke="#8a8a8a" /></S>}</Slot>
              {f.n}
              {f.c && <Count $bold={f.b}>{f.c}</Count>}
            </FolderRow>
          ))}
        </FolderPane>

        <ListPane>
          <SearchWrap>
            <SearchBox>
              <SearchInput>
                Search Current Mailbox
                <S w={13} h={14}><circle cx="8" cy="5" r="3.8" stroke="#2a6fa8" strokeWidth="1.5" /><path d="M5 8l-4 5" stroke="#2a6fa8" strokeWidth="2" /></S>
              </SearchInput>
              <SearchScope>Current Mailbox <Caret /></SearchScope>
            </SearchBox>
          </SearchWrap>
          <ListTabs>
            <LTab $active>Focused</LTab>
            <LTab>Other</LTab>
            <Sorter>
              By Date
              <S w={9} h={20}><path d="M1 9l3.5 3.5L8 9" stroke="#444" /></S>
              <S w={24} h={20}><path d="M16 17V6M13 9l3-3 3 3" stroke="#444" /></S>
            </Sorter>
          </ListTabs>
          <ListRule />
          <HeaderIcons>
            !
            <S w={12} h={14}><path d="M6 1l4 9 1.5 2H.5L2 10zM4.5 13h3" stroke="#555" /></S>
          </HeaderIcons>
          <GroupHead>
            <S w={7} h={7}><path d="M7 0v7H0z" fill="#555" /></S>
            Date
          </GroupHead>
          <SelBlock />
          <RowFoot><TinyMark /></RowFoot>
        </ListPane>

        <Reading>
          <S w={44} h={27}>
            <rect x=".5" y=".5" width="43" height="26" fill="#fff" stroke="#7f7f7f" />
            <rect x="34" y="3" width="6" height="8" fill="#44719f" />
            <path d="M10 16.5h19M10 20.5h19" stroke="#aaa" />
          </S>
          <ReadTitle>Select an item to read</ReadTitle>
          <ReadLink>Click here to always preview messages</ReadLink>
        </Reading>
      </Main>

      <NavBar>
        <NavItem $active>Mail</NavItem>
        <NavItem>Calendar</NavItem>
        <NavItem>People</NavItem>
        <NavItem>Tasks</NavItem>
        <NavDots><Dot /><Dot /><Dot /></NavDots>
      </NavBar>
      <StatusBar>
        <StatusText>Items: 2</StatusText>
        <StatusText $ml={1271}>All folders are up to date.</StatusText>
        <StatusText $ml={20}>Connected to: Microsoft Exchange</StatusText>
        <ViewBtn $on $ml={20}><S w={15} h={15}><path d="M.5.5h14v14H.5zM5 .5v14" stroke="#666" /></S></ViewBtn>
        <ViewBtn>
          <S w={13} h={15}><path d="M.5.5h5l1 1 1-1h5v13h-5l-1 1-1-1h-5zM6.5 1.5v12M2 3.5h3M2 6h3M2 8.5h3M8 3.5h3M8 6h3M8 8.5h3" stroke="#666" /></S>
        </ViewBtn>
        <Zoomer>
          <S w={123} h={11}><path d="M0 5.5h7M14 5.5h100M64 2.5v6M115 5.5h8M119 1.5v8" stroke="#aaa" /></S>
          <ZoomPct>10%</ZoomPct>
        </Zoomer>
      </StatusBar>

      <Dialog>
        <DialogTitle>
          <S w={15} h={14}><rect width="15" height="14" fill="#e4e9ee" /><rect x="1" y="1" width="5" height="12" fill="#2b5f8a" /><rect x="7" y="3" width="7" height="1" fill="#889" /></S>
          Text Lightning
          <DialogBtns>
            <S w={11} h={2}><path d="M0 1h11" stroke="#eaf4fc" /></S>
            <S w={11} h={11}><path d="M.5.5h10v10H.5z" stroke="#eaf4fc" /></S>
            <X size={12} c="#eaf4fc" />
          </DialogBtns>
        </DialogTitle>
        <Toolbar>
          <Tool w={56} icon={<DlgFile />} label="File" />
          <ToolArrow><DCaret /></ToolArrow>
          <Tool w={62} icon={<DlgNewText />} label="New Text" />
          <ToolArrow><DCaret /></ToolArrow>
          <Tool w={74} icon={<DlgFolder />} label="New Folder" />
          <Tool w={82} icon={<DocPair w={28} h={31} />} label="Copy Text" />
          <Tool w={74} icon={<DlgEdit />} label="Edit Text" />
          <Tool w={70} icon={<DlgDelete />} label="Delete" />
          <Tool w={86} icon={<DlgTools />} label="Options" />
          <Tool w={69} icon={<HelpCircle size={30} />} label="Help" />
          <Tool w={64} icon={<DlgBuoy />} label="Support" />
          <ToolArrow $w={6}><DCaret /></ToolArrow>
          <Tool w={78} icon={<DlgInfo />} label="About..." />
        </Toolbar>
        <SearchRow>
          Search:
          <DialogInput />
          <S w={14} h={12}><path d="M1 8l6-7h6l-6 8-3 2H2z" fill="#d8d8d8" stroke="#aaa" /></S>
        </SearchRow>
        <Tree>
          <TreeRow $pl={9}><TreeFolder /> Quick Text and Files</TreeRow>
          <TreeRow $pl={6}><ChevSlot><TreeChev /></ChevSlot><TreeFolder /> Example</TreeRow>
          {examples.map(e => <TreeRow key={e} $pl={29} $gap={6}><TreeText /> {e}</TreeRow>)}
          <TreeRow $pl={29} $gap={6}><TreeDisk /> Welcome.txt</TreeRow>
          <TreeRow $pl={6}><ChevSlot><TreeChev /></ChevSlot><TreeFolder /> General</TreeRow>
          <TreeRow $sel $ml={27} $pl={2} $gap={6}><TreeText /> Company Description</TreeRow>
          <TreeRow $pl={29} $gap={6}><TreeText /> Product Description</TreeRow>
        </Tree>
        <Tips>
          <TipHead>
            <CheckBox><S w={9} h={9}><path d="M.5 5l3 3L8.5 1" stroke="#444" strokeWidth="1.2" /></S></CheckBox>
            Power Tips:
          </TipHead>
          <TipLines>
            <div>- To quickly create a new item drag text or a file and drop it into a folder</div>
            <div>- To move an object to a different folder, hold down the Shift key and drag it</div>
            <div>- You can also drag text to other programs (without the Shift key)</div>
          </TipLines>
        </Tips>
      </Dialog>

      <Callout>
        <CalloutTail>
          <S w={22} h={23}><path d="M0 22L20 1v21z" fill="#fff" /><path d="M0 22L20 1v21" stroke="#767676" /></S>
        </CalloutTail>
        <CalloutClose><X size={10} c="#888" sw={2} /></CalloutClose>
        <CalloutTitle>Company Description</CalloutTitle>
        <CalloutBody>{`Insert text in response to an enquiry about your
company

"Thank you for your enquiry about Dotdash.

You can find out more about our company at:

mysite.com"`}</CalloutBody>
      </Callout>
    </Page>
  );
}
